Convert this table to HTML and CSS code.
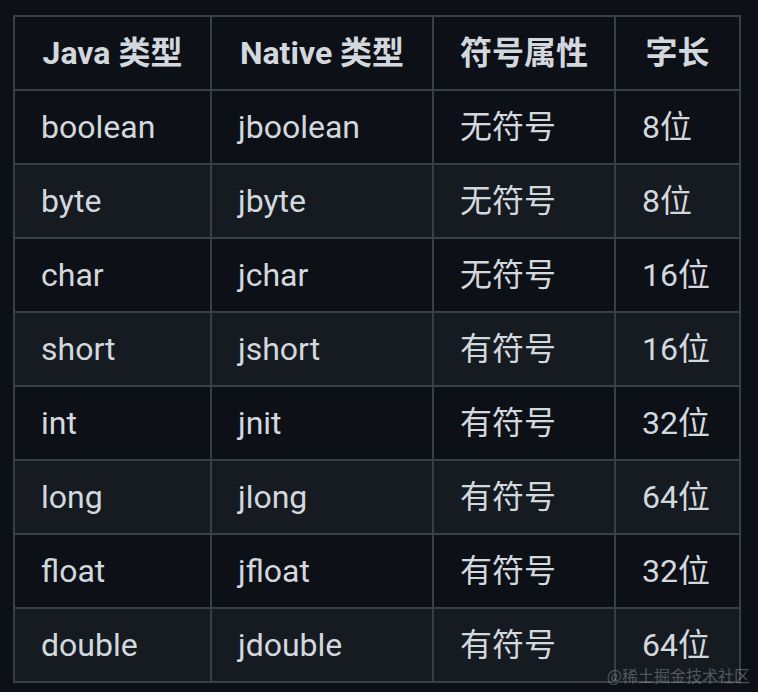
FILE: index.html
```html
<!DOCTYPE html>
<html lang="zh-CN">
<head>
<meta charset="utf-8">
<title>Java 类型</title>
<link rel="stylesheet" href="styles.css">
</head>
<body>
<div class="page">
  <table class="types">
    <thead>
      <tr>
        <th class="c1">Java 类型</th>
        <th class="c2">Native 类型</th>
        <th class="c3">符号属性</th>
        <th class="c4">字长</th>
      </tr>
    </thead>
    <tbody>
      <tr><td>boolean</td><td>jboolean</td><td>无符号</td><td>8位</td></tr>
      <tr><td>byte</td><td>jbyte</td><td>无符号</td><td>8位</td></tr>
      <tr><td>char</td><td>jchar</td><td>无符号</td><td>16位</td></tr>
      <tr><td>short</td><td>jshort</td><td>有符号</td><td>16位</td></tr>
      <tr><td>int</td><td>jnit</td><td>有符号</td><td>32位</td></tr>
      <tr><td>long</td><td>jlong</td><td>有符号</td><td>64位</td></tr>
      <tr><td>float</td><td>jfloat</td><td>有符号</td><td>32位</td></tr>
      <tr><td>double</td><td>jdouble</td><td>有符号</td><td>64位</td></tr>
    </tbody>
  </table>
  <div class="watermark">@稀土掘金技术社区</div>
</div>
</body>
</html>
```

FILE: styles.css
```css
html, body {
  margin: 0;
  padding: 0;
  background: #0d1117;
}

.page {
  position: relative;
  width: 758px;
  height: 692px;
  padding: 15px 0 0 13px;
  box-sizing: border-box;
  overflow: hidden;
}

.types {
  border-collapse: separate;
  border-spacing: 0;
  table-layout: fixed;
  width: 728px;
  border-left: 2px solid #3a3f47;
  border-top: 2px solid #3a3f47;
  font-family: Roboto, "Noto Sans CJK SC", sans-serif;
  font-size: 32px;
  line-height: 48px;
  color: #d3d8de;
}

.types th,
.types td {
  box-sizing: border-box;
  padding: 12px 26px;
  border-right: 2px solid #3a3f47;
  border-bottom: 2px solid #3a3f47;
  white-space: nowrap;
  height: 74px;
}

.types th {
  font-weight: 700;
  text-align: center;
}

.types td {
  text-align: left;
}

.c1 { width: 197px; }
.c2 { width: 222px; }
.c3 { width: 182px; }
.c4 { width: 125px; }

.types tbody tr {
  background: #0d1117;
}

.types tbody tr:nth-child(2n) {
  background: #161b22;
}

.watermark {
  position: absolute;
  right: 8px;
  bottom: 7px;
  font-family: "Noto Sans CJK SC", sans-serif;
  font-size: 16px;
  line-height: 20px;
  color: rgba(200, 205, 212, 0.35);
}
```
